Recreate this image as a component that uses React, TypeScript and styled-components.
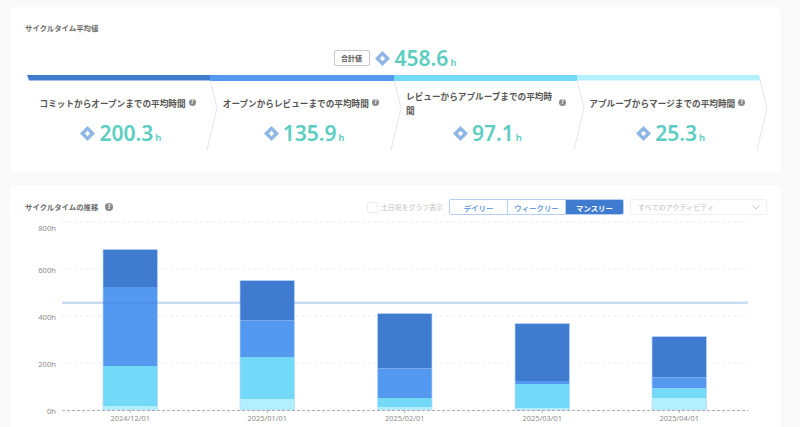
import styled, { createGlobalStyle } from 'styled-components';

const GlobalStyle = createGlobalStyle`
  html, body {
    margin: 0;
    height: 427px;
    overflow: hidden;
    background: #f9f9f9;
  }
  body {
    font-family: "Noto Sans CJK JP", "Noto Sans", sans-serif;
  }
`;

const Page = styled.div`
  display: flex;
  flex-direction: column;
  gap: 12px;
  width: 771px;
  padding: 7px 0 0 10px;
`;

const Card = styled.section`
  background: #fff;
  border-radius: 5px;
  box-shadow: 0 0 2px rgba(0, 0, 0, 0.02);
`;

const SummaryCard = styled(Card)`
  height: 166px;
  box-sizing: border-box;
  padding: 15px 0 0 15px;
`;

const TrendCard = styled(Card)`
  height: 260px;
  box-sizing: border-box;
  padding: 14px 14px 0 15px;
`;

const SmallTitle = styled.h2`
  margin: 0;
  font-size: 7.4px;
  line-height: 12px;
  font-weight: 700;
  color: #6a6a6a;
`;

const TotalRow = styled.div`
  display: flex;
  align-items: center;
  justify-content: center;
  gap: 5px;
  height: 22px;
  margin: 13px 0 6px;
  padding-right: 16px;
`;

const TotalBadge = styled.span`
  display: flex;
  align-items: center;
  justify-content: center;
  width: 36px;
  height: 16px;
  box-sizing: border-box;
  border: 1px solid #c8c8c8;
  border-radius: 2px;
  font-size: 7px;
  font-weight: 700;
  color: #555;
`;

const Flow = styled.div`
  display: grid;
  grid-template-columns: repeat(4, 183.25px);
  margin-left: 2px;
`;

const Step = styled.div`
  position: relative;
  height: 75px;
`;

const StepBar = styled.div<{ $color: string; $edge?: 'first' | 'last' }>`
  height: 5.5px;
  background: ${(p) => p.$color};
  clip-path: ${(p) =>
    p.$edge === 'first'
      ? 'polygon(0 0, 100% 0, 100% 100%, 2px 100%)'
      : p.$edge === 'last'
        ? 'polygon(0 0, calc(100% - 1px) 0, 100% 100%, 0 100%)'
        : 'none'};
`;

const Chevron = styled.svg`
  position: absolute;
  top: 5px;
  right: -8px;
  width: 12px;
  height: 70px;
  overflow: visible;
`;

const StepBody = styled.div`
  display: flex;
  flex-direction: column;
  padding: 0 8px 0 12.5px;
`;

const StepHead = styled.div`
  display: flex;
  align-items: center;
  gap: 3px;
  height: 36px;
  margin-top: 4px;
`;

const StepLabel = styled.span`
  max-width: 150px;
  font-size: 8.65px;
  line-height: 14px;
  font-weight: 700;
  color: #555;
`;

const Help = styled.span<{ $size?: number }>`
  flex: none;
  display: inline-flex;
  align-items: center;
  justify-content: center;
  width: ${(p) => p.$size ?? 7}px;
  height: ${(p) => p.$size ?? 7}px;
  border-radius: 50%;
  background: #8a8a8a;
  color: #fff;
  font-size: ${(p) => (p.$size ?? 7) - 1.5}px;
  line-height: 1;
  font-weight: 700;
`;

const Metric = styled.div`
  display: flex;
  align-items: center;
  justify-content: center;
  gap: 4px;
  height: 30px;
  margin-top: -2px;
`;

const Value = styled.span`
  font-family: "Noto Sans", sans-serif;
  font-size: 21px;
  line-height: 1;
  font-weight: 600;
  color: #5ccdc1;
`;

const Unit = styled.span`
  margin-left: 2px;
  font-size: 9.5px;
  font-weight: 600;
`;

const TrendHeader = styled.div`
  display: flex;
  align-items: center;
  height: 16px;
`;

const TrendTitle = styled(SmallTitle)`
  display: flex;
  align-items: center;
  gap: 7px;
  margin-right: auto;
`;

const WeekendToggle = styled.label`
  display: flex;
  align-items: center;
  gap: 3px;
  margin-right: 6px;
  font-size: 6.9px;
  color: #c2c2c2;
`;

const CheckBox = styled.span`
  width: 11px;
  height: 11px;
  box-sizing: border-box;
  border: 1px solid #eee;
  border-radius: 2px;
`;

const Segments = styled.div`
  display: flex;
  width: 175px;
  height: 16px;
  box-sizing: border-box;
  border: 1px solid #b7cff0;
  border-radius: 2px;
  overflow: hidden;
`;

const SegmentButton = styled.button<{ $active?: boolean }>`
  flex: 1;
  padding: 0;
  border: none;
  border-left: 1px solid #b7cff0;
  background: ${(p) => (p.$active ? '#3f7ccf' : '#fff')};
  color: ${(p) => (p.$active ? '#fff' : '#6f9fe0')};
  font-family: inherit;
  font-size: 7.4px;
  font-weight: 700;
  &:first-child { border-left: none; }
`;

const ActivitySelect = styled.div`
  display: flex;
  align-items: center;
  justify-content: space-between;
  width: 137px;
  height: 16px;
  box-sizing: border-box;
  margin-left: 6px;
  padding: 0 6px 0 7px;
  border: 1px solid #f0f0f0;
  border-radius: 2px;
  font-size: 7.1px;
  color: #bdbdbd;
`;

const ChartSvg = styled.svg`
  display: block;
  width: 742px;
  height: 222px;
  margin-top: 5px;
  font-family: "Noto Sans", sans-serif;
`;

const Diamond = () => (
  <svg width={15} height={15} viewBox="0 0 14 14" style={{ flex: 'none' }}>
    <path d="M7 0 L14 7 L7 14 L0 7 Z" fill="#8fb6e8" />
    <path d="M7 4.5 L9.5 7 L7 9.5 L4.5 7 Z" fill="#fff" />
  </svg>
);

const steps = [
  { label: 'コミットからオープンまでの平均時間', value: '200.3', color: '#3f7ccf' },
  { label: 'オープンからレビューまでの平均時間', value: '135.9', color: '#5499f0' },
  { label: 'レビューからアプルーブまでの平均時間', value: '97.1', color: '#72d9f8' },
  { label: 'アプルーブからマージまでの平均時間', value: '25.3', color: '#b2f0ff' },
];

// 各棒の区切りのy座標（上から）
const bars = [
  { x: 103, label: '2024/12/01', ys: [249.5, 287, 366, 406, 410] },
  { x: 240, label: '2025/01/01', ys: [280.5, 320.5, 357, 399.5, 410] },
  { x: 377.5, label: '2025/02/01', ys: [313.5, 368.5, 398, 407, 410] },
  { x: 515, label: '2025/03/01', ys: [323.5, 381, 384, 408, 410] },
  { x: 652, label: '2025/04/01', ys: [336.5, 377.5, 388.5, 398, 410] },
];

const colors = steps.map((s) => s.color);

const gridLines = [222, 269, 316, 363];
const yLabels = [
  { y: 231, text: '800h' },
  { y: 272.5, text: '600h' },
  { y: 319.5, text: '400h' },
  { y: 366.5, text: '200h' },
  { y: 413.5, text: '0h' },
];

function Chart() {
  return (
    <ChartSvg viewBox="25 220 742 222">
      {gridLines.map((y) => (
        <line key={y} x1={62} x2={748} y1={y} y2={y} stroke="#e8e8e8" strokeWidth={0.8} strokeDasharray="3 3" />
      ))}
      {yLabels.map((l) => (
        <text key={l.text} x={56} y={l.y} textAnchor="end" fontSize={7.6} fill="#8c8c8c">
          {l.text}
        </text>
      ))}
      {bars.map((b) => (
        <g key={b.label}>
          {colors.map((c, i) => (
            <rect key={c} x={b.x} y={b.ys[i]} width={54.5} height={b.ys[i + 1] - b.ys[i]} fill={c} />
          ))}
          <rect
            x={b.x}
            y={b.ys[0]}
            width={54.5}
            height={410 - b.ys[0]}
            fill="none"
            stroke="#bcd7fa"
            strokeWidth={0.7}
          />
          <line x1={b.x + 27.25} x2={b.x + 27.25} y1={410} y2={413} stroke="#999" strokeWidth={0.7} />
          <text x={b.x + 27.25} y={421} textAnchor="middle" fontSize={7.4} fill="#8c8c8c">
            {b.label}
          </text>
        </g>
      ))}
      <rect x={62} y={301.5} width={686} height={2.6} fill="#3f7ccf" opacity={0.28} />
      <line x1={62} x2={748} y1={410.5} y2={410.5} stroke="#9a9a9a" strokeWidth={0.8} strokeDasharray="3 2" />
    </ChartSvg>
  );
}

export default function App() {
  return (
    <>
      <GlobalStyle />
      <Page>
        <SummaryCard>
          <SmallTitle>サイクルタイム平均値</SmallTitle>
          <TotalRow>
            <TotalBadge>合計値</TotalBadge>
            <Diamond />
            <Value>
              458.6<Unit>h</Unit>
            </Value>
          </TotalRow>
          <Flow>
            {steps.map((s, i) => (
              <Step key={s.label}>
                <StepBar $color={s.color} $edge={i === 0 ? 'first' : i === 3 ? 'last' : undefined} />
                <Chevron viewBox="0 0 12 70">
                  <path d="M4 0 L11 28 L1 70" fill="none" stroke="#dedede" strokeWidth={0.8} />
                </Chevron>
                <StepBody>
                  <StepHead>
                    <StepLabel>{s.label}</StepLabel>
                    <Help>?</Help>
                  </StepHead>
                  <Metric>
                    <Diamond />
                    <Value>
                      {s.value}
                      <Unit>h</Unit>
                    </Value>
                  </Metric>
                </StepBody>
              </Step>
            ))}
          </Flow>
        </SummaryCard>
        <TrendCard>
          <TrendHeader>
            <TrendTitle>
              サイクルタイムの推移
              <Help $size={7.5}>?</Help>
            </TrendTitle>
            <WeekendToggle>
              <CheckBox />
              土日祝をグラフ表示
            </WeekendToggle>
            <Segments>
              <SegmentButton>デイリー</SegmentButton>
              <SegmentButton>ウィークリー</SegmentButton>
              <SegmentButton $active>マンスリー</SegmentButton>
            </Segments>
            <ActivitySelect>
              すべてのアクティビティ
              <svg width="8" height="5" viewBox="0 0 8 5">
                <path d="M0.5 0.5 L4 4 L7.5 0.5" fill="none" stroke="#b5b5b5" strokeWidth={0.8} />
              </svg>
            </ActivitySelect>
          </TrendHeader>
          <Chart />
        </TrendCard>
      </Page>
    </>
  );
}
